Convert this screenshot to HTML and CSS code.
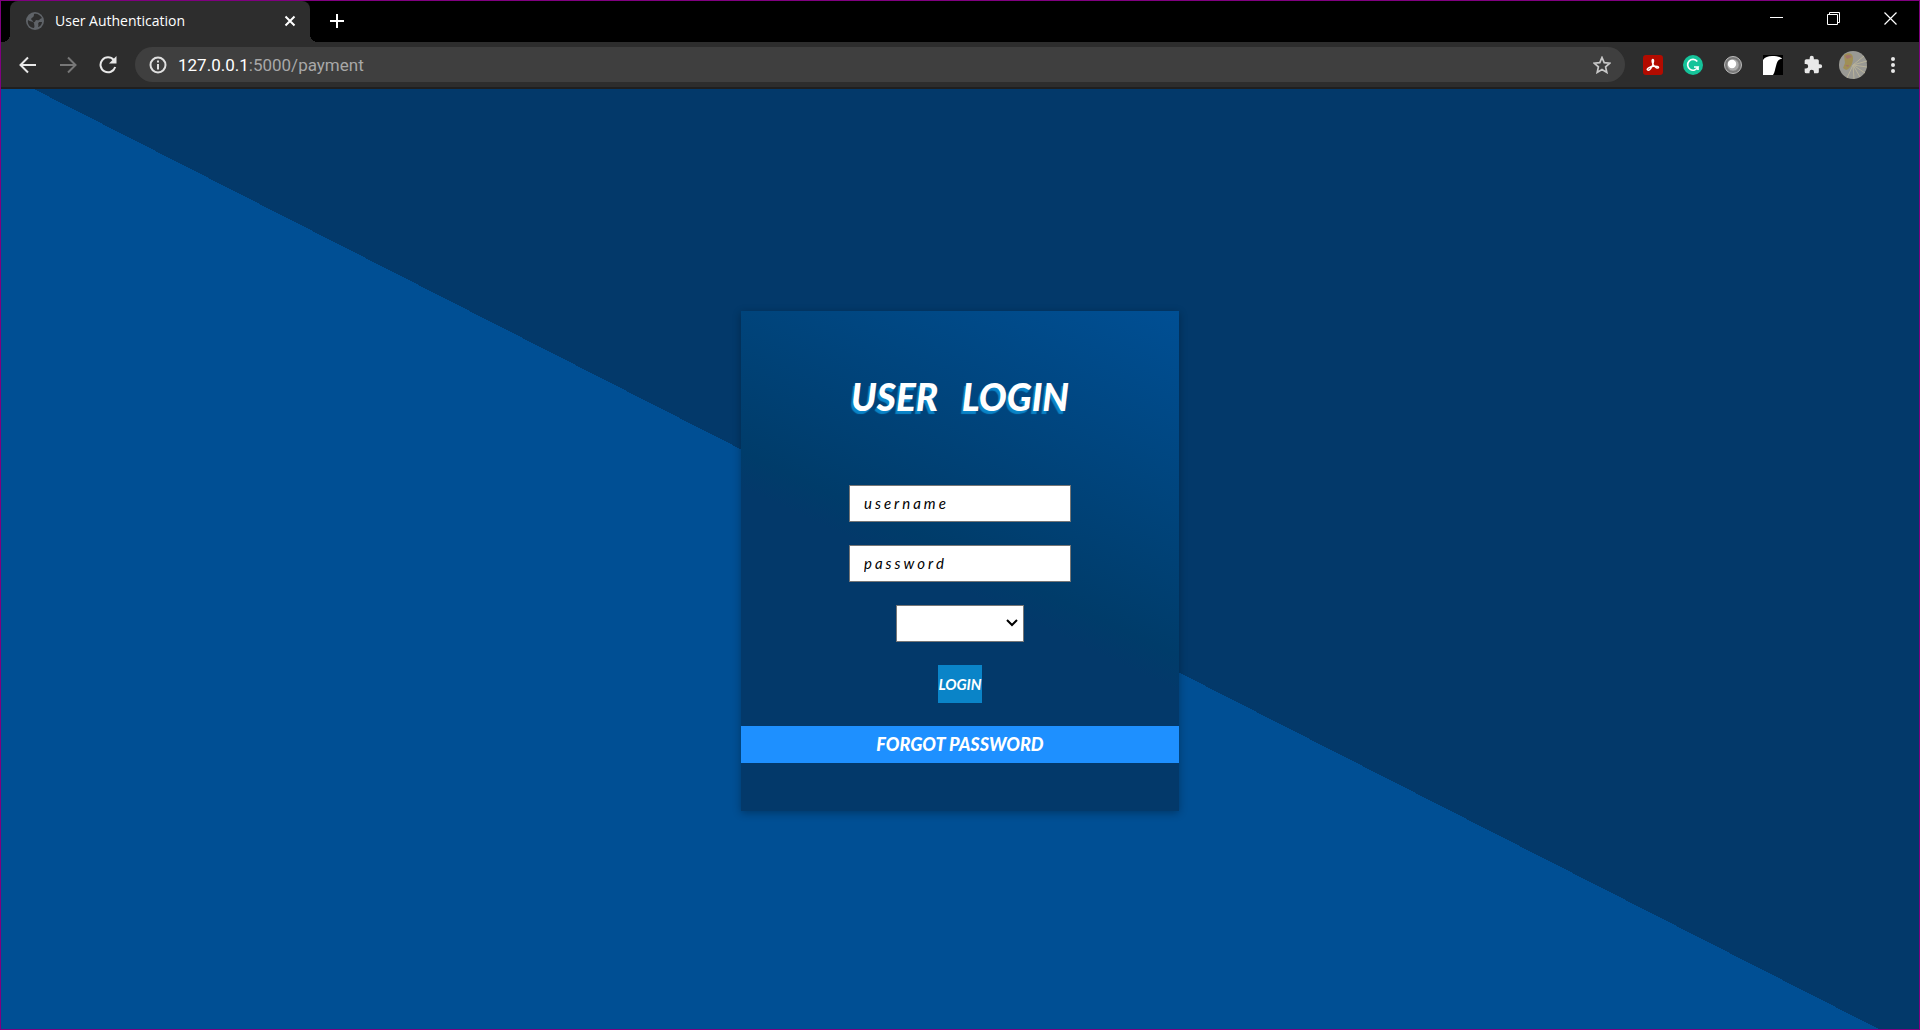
FILE: index.html
```html
<!DOCTYPE html>
<html lang="en">
<head>
<meta charset="utf-8">
<meta name="viewport" content="width=device-width, initial-scale=1">
<title>User Authentication</title>
<link rel="stylesheet" href="styles.css">
</head>
<body>
<div class="window">
  <header class="tab-strip">
    <div class="tab">
      <svg class="tab-icon" viewBox="0 0 18 18"><circle cx="9" cy="9" r="9" fill="#5f6368"/><path d="M2 8c2 2 5 1 6 3 0 2 1 3 0 5C4 16 1 12 2 8zM8 2c3-1 6 1 8 4l-2 1c-1 2-2 1-4 1-1 1-1 3-3 2 0-2-2-2-2-3 1-2 3-1 3-5zM13 10l3 0c0 2-2 5-4 5 0-1 1-2 0-3z" fill="#2d2d2d"/></svg>
      <span class="tab-title">User Authentication</span>
      <button class="tab-button" aria-label="Close tab"><svg width="12" height="12" viewBox="0 0 12 12"><path d="M1.500 1.500l9 9m0-9l-9 9" stroke="#fff" stroke-width="2"/></svg></button>
    </div>
    <button class="new-tab" aria-label="New tab"><svg width="16" height="16" viewBox="0 0 16 16"><path d="M8 1v14M1 8h14" stroke="#fff" stroke-width="2"/></svg></button>
    <div class="window-controls">
      <button class="window-button" aria-label="Minimize"><svg width="13" height="13" viewBox="0 0 13 13"><path d="M0 5.500h13" stroke="#fff"/></svg></button>
      <button class="window-button" aria-label="Restore"><svg width="13" height="13" viewBox="0 0 13 13" fill="none" stroke="#fff"><path d="M.5 2.500h10v10h-10zM2.500 2.500v-2h10v10h-2"/></svg></button>
      <button class="window-button" aria-label="Close"><svg width="13" height="13" viewBox="0 0 13 13"><path d="M.5.5l12 12m0-12l-12 12" stroke="#fff" stroke-width="1.200"/></svg></button>
    </div>
  </header>
  <nav class="toolbar" aria-label="Browser">
    <div class="nav-buttons">
      <button class="icon-button" aria-label="Back"><svg width="18" height="18" viewBox="0 0 18 18" fill="none" stroke="#e8e8e8" stroke-width="2"><path d="M17 9H2M9 1.500L1.500 9 9 16.500"/></svg></button>
      <button class="icon-button" aria-label="Forward"><svg width="18" height="18" viewBox="0 0 18 18" fill="none" stroke="#777" stroke-width="2"><path d="M1 9h15M9 1.500L16.500 9 9 16.500"/></svg></button>
      <button class="icon-button" aria-label="Reload"><svg width="18" height="18" viewBox="0 0 18 18"><path d="M14.800 4A7.500 7.500 0 1 0 16.200 11" fill="none" stroke="#e8e8e8" stroke-width="2"/><path d="M17.500 0v7.500H10z" fill="#e8e8e8"/></svg></button>
    </div>
    <div class="address-bar">
      <svg width="18" height="18" viewBox="0 0 18 18"><circle cx="9" cy="9" r="7.500" fill="none" stroke="#e0e0e0" stroke-width="2"/><path d="M9 4.500v2M9 8v5.500" stroke="#e0e0e0" stroke-width="2"/></svg>
      <span class="address">127.0.0.1<span class="address-path">:5000/payment</span></span>
      <button class="icon-button" aria-label="Bookmark"><svg width="18" height="18" viewBox="0 0 18 18"><path d="M9 1.500l2.200 5.200 5.600.5-4.200 3.700 1.200 5.500L9 13.500l-4.800 2.900 1.200-5.500-4.200-3.700 5.600-.5z" fill="none" stroke="#c8c8c8" stroke-width="1.700"/></svg></button>
    </div>
    <div class="extensions">
      <button class="icon-button" aria-label="PDF tools"><svg width="20" height="20" viewBox="0 0 20 20"><rect width="20" height="20" rx="3" fill="#b30b00"/><path d="M4.500 15c-1.500-1 2.500-3.500 6-3.800 3-.3 5.500.3 5 1.500-.6 1.300-4-.7-5.300-3C8.800 7 8.800 4.500 9.800 4.500c1.200 0 .8 3-.2 5.500C8.300 13.500 6 16 4.500 15z" fill="none" stroke="#fff" stroke-width="1.400"/></svg></button>
      <button class="icon-button" aria-label="Writing assistant"><svg width="20" height="20" viewBox="0 0 20 20"><circle cx="10" cy="10" r="10" fill="#15c39a"/><path d="M14.300 6.500A5.400 5.400 0 1 0 15 12H11M15 11.200V15" fill="none" stroke="#fff" stroke-width="1.700"/></svg></button>
      <button class="icon-button" aria-label="Lens"><svg width="20" height="20" viewBox="0 0 20 20"><circle cx="10" cy="10" r="8.500" fill="#777" stroke="#bbb"/><circle cx="10" cy="10" r="6.300" fill="#aaa" stroke="#777"/><circle cx="9" cy="9" r="4.200" fill="#fff"/></svg></button>
      <button class="icon-button" aria-label="Page extension"><svg width="20" height="20" viewBox="0 0 20 20"><path d="M0 0h20v20H0z" fill="#000"/><path d="M0 20V5C2 2 5 1 9 1c5 0 9 1 10 3-4 0-5 3-6 7-1 3-1 6-3 9z" fill="#fff"/></svg></button>
      <button class="icon-button" aria-label="Extensions"><svg width="20" height="20" viewBox="0 0 24 24"><path d="M20.500 11H19V7a2 2 0 0 0-2-2h-4V3.500a2.500 2.500 0 0 0-5 0V5H4a2 2 0 0 0-2 2v3.800h1.500a2.700 2.700 0 0 1 0 5.400H2V20a2 2 0 0 0 2 2h3.800v-1.500a2.700 2.700 0 0 1 5.400 0V22H17a2 2 0 0 0 2-2v-4h1.500a2.500 2.500 0 0 0 0-5z" fill="#e8e8e8"/></svg></button>
      <button class="icon-button profile" aria-label="Profile"><svg width="28" height="28" viewBox="0 0 28 28"><circle cx="14" cy="14" r="14" fill="#999994"/><path d="M14 14L25 5M14 14l14-4M14 14l14 2M14 14l12 8M14 14l7 12M14 14l1 14M14 14L8 27" stroke="#b9b39a" stroke-width="1"/><path d="M5 4c4-3 9-2 9 3 0 6-3 11-7 12l-3-2 2-5z" fill="#a08f55"/><path d="M6 5c3-2 6-1 7 1l-5 2zM6 14l4 0-1 2z" fill="#a1736b"/></svg></button>
      <button class="icon-button" aria-label="Menu"><svg width="20" height="20" viewBox="0 0 20 20" fill="#e8e8e8"><circle cx="10" cy="4" r="2"/><circle cx="10" cy="10" r="2"/><circle cx="10" cy="16" r="2"/></svg></button>
    </div>
  </nav>
  <main class="page">
    <form class="login-card">
      <h1 class="login-title">USER&nbsp;&nbsp; LOGIN</h1>
      <input class="field" type="text" placeholder="username" aria-label="Username">
      <input class="field" type="password" placeholder="password" aria-label="Password">
      <select class="role" aria-label="Role"><option></option><option>Admin</option><option>User</option></select>
      <button class="login-button" type="button">LOGIN</button>
      <a class="forgot" href="#">FORGOT PASSWORD</a>
    </form>
  </main>
</div>
</body>
</html>
```
FILE: styles.css
```css
* { box-sizing: border-box; }

body {
  margin: 0;
  font-family: "Open Sans", "Noto Sans", sans-serif;
}

button {
  padding: 0;
  border: 0;
  background: none;
}

svg { display: block; flex: none; }

.window {
  display: flex;
  flex-direction: column;
  min-height: 100vh;
  border: 1px solid #800080;
}

.tab-strip {
  display: flex;
  height: 41px;
  padding-left: 9px;
  background: #000;
}

.tab {
  position: relative;
  display: flex;
  align-items: center;
  gap: 11px;
  width: 300px;
  padding: 0 14px 2px 16px;
  border-radius: 8px 8px 0 0;
  background: #2d2d2d;
  color: #fff;
}

/* Flared feet joining the tab to the toolbar */
.tab::before,
.tab::after {
  content: "";
  position: absolute;
  bottom: 0;
  width: 8px;
  height: 8px;
}

.tab::before {
  right: 100%;
  background: radial-gradient(circle at 0 0, transparent 8px, #2d2d2d 8px);
}

.tab::after {
  left: 100%;
  background: radial-gradient(circle at 100% 0, transparent 8px, #2d2d2d 8px);
}

.tab-icon { width: 18px; height: 18px; }

.tab-title {
  flex: 1;
  font-size: 14px;
  line-height: 20px;
}

.new-tab { padding: 0 19px 2px; }

.window-controls {
  display: flex;
  margin-left: auto;
}

.window-button {
  display: flex;
  justify-content: center;
  width: 57px;
  padding-top: 11px;
}

.toolbar {
  display: flex;
  align-items: center;
  gap: 18px;
  height: 47px;
  padding: 0 16px 0 18px;
  border-bottom: 2px solid #1f1f1f;
  background: #2d2d2d;
}

.nav-buttons {
  display: flex;
  gap: 22px;
}

.icon-button {
  display: flex;
  align-items: center;
  justify-content: center;
}

.address-bar {
  display: flex;
  flex: 1;
  align-items: center;
  gap: 11px;
  height: 35px;
  padding: 0 14px;
  border-radius: 18px;
  background: #3f3f3f;
}

.address {
  flex: 1;
  color: #fff;
  font-family: Roboto, "Open Sans", sans-serif;
  font-size: 17px;
  line-height: 24px;
}

.address-path { color: #a8a8a8; }

.extensions {
  display: flex;
  align-items: center;
  gap: 20px;
}

.profile { margin: 0 -4px; }

.page {
  display: flex;
  flex: 1;
  align-items: center;
  justify-content: center;
  padding: 3px 0 0;
  background: linear-gradient(27deg, #004f94 49.9%, #03396a 49.9%);
}

.login-card {
  display: flex;
  flex-direction: column;
  align-items: center;
  gap: 23px;
  width: 438px;
  padding: 60px 0 48px;
  background: linear-gradient(205deg, #004f94, #003c6a 49%, #03396a 54%);
  box-shadow: 0 2px 8px rgba(0, 0, 0, 0.3);
  font-family: Lato, "Open Sans", sans-serif;
}

.login-title {
  margin: 0 0 39px;
  color: #fff;
  font-size: 37px;
  font-style: italic;
  font-weight: 900;
  line-height: 52px;
  text-shadow: -2px 3px 1px #0a84c8;
}

.field {
  width: 222px;
  height: 37px;
  padding: 0 14px;
  border: 1px solid #767676;
  background: #fff;
  color: #000;
  font: italic 15px Lato, sans-serif;
  letter-spacing: 3px;
}

.field::placeholder { color: #000; opacity: 1; }

.role {
  width: 128px;
  height: 37px;
  border: 1px solid #767676;
  border-radius: 0;
  appearance: none;
  background: #fff url("data:image/svg+xml,%3Csvg xmlns='http://www.w3.org/2000/svg' width='12' height='8'%3E%3Cpath d='M1 1l5 5 5-5' fill='none' stroke='%23000' stroke-width='2'/%3E%3C/svg%3E") no-repeat right 5px center;
}

.login-button {
  height: 38px;
  background: #0a84c8;
  color: #fff;
  font: italic 700 15px Lato, sans-serif;
}

.forgot {
  align-self: stretch;
  background: #1e90ff;
  color: #fff;
  font-size: 18px;
  font-style: italic;
  font-weight: 900;
  line-height: 37px;
  text-align: center;
  text-decoration: none;
}
```
